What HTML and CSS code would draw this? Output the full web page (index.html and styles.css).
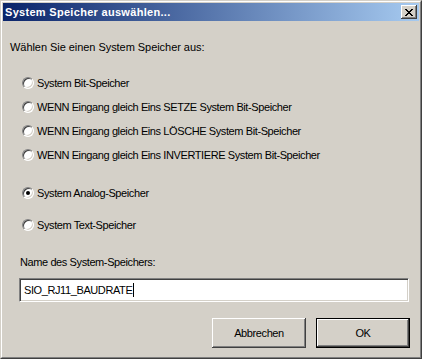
FILE: index.html
```html
<!DOCTYPE html>
<html>
  <head>
    <meta charset="UTF-8" />
    <title>System Speicher auswählen...</title>
    <link rel="stylesheet" href="styles.css">
  </head>
  <body>
    <div class="window">
      <div class="frame">
        <div class="titlebar">
          <span class="title">System Speicher auswählen...</span>
          <span class="close-btn">
            <svg width="8" height="7" viewBox="0 0 8 7">
              <path d="M0 0h2v1h1v1h2v-1h1v-1h2v1h-1v1h-1v1h-1v1h1v1h1v1h1v1h-2v-1h-1v-1h-2v1h-1v1h-2v-1h1v-1h1v-1h1v-1h-1v-1h-1v-1h-1z" fill="#000" />
            </svg>
          </span>
        </div>

        <div class="content">
          <div class="intro">Wählen Sie einen System Speicher aus:</div>

          <div class="radio-group">
            <label class="radio-row"><span class="radio"></span>System Bit-Speicher</label>
            <label class="radio-row"><span class="radio"></span>WENN Eingang gleich Eins SETZE System Bit-Speicher</label>
            <label class="radio-row"><span class="radio"></span>WENN Eingang gleich Eins LÖSCHE System Bit-Speicher</label>
            <label class="radio-row"><span class="radio"></span>WENN Eingang gleich Eins INVERTIERE System Bit-Speicher</label>
          </div>

          <label class="radio-row analog"><span class="radio checked"></span>System Analog-Speicher</label>
          <label class="radio-row text-row"><span class="radio"></span>System Text-Speicher</label>

          <div class="field-label">Name des System-Speichers:</div>
          <div class="textbox">SIO_RJ11_BAUDRATE<span class="caret"></span></div>

          <div class="buttons">
            <span class="btn">Abbrechen</span>
            <span class="btn default"><span class="btn-inner">OK</span></span>
          </div>
        </div>
      </div>
    </div>
  </body>
</html>
```

FILE: styles.css
```css
body {
  margin: 0;
  font-family: "Liberation Sans", Arial, sans-serif;
  font-size: 11px;
  letter-spacing: -0.4px;
  color: #000;
  background: #d4d0c8;
}

.window {
  width: 422px;
  height: 359px;
  box-sizing: border-box;
  border: 1px solid;
  border-color: #d4d0c8 #404040 #404040 #d4d0c8;
  background: #d4d0c8;
}

.frame {
  height: 100%;
  box-sizing: border-box;
  border: 1px solid;
  border-color: #ffffff #808080 #808080 #ffffff;
  padding: 1px;
  display: flex;
  flex-direction: column;
}

.titlebar {
  height: 18px;
  display: flex;
  align-items: center;
  justify-content: space-between;
  background: linear-gradient(90deg, #0a246a 0%, #a6caf0 100%);
  padding: 0 2px;
}

.title {
  color: #fff;
  font-weight: 700;
  font-size: 11px;
  letter-spacing: 0.3px;
}

.close-btn {
  width: 16px;
  height: 14px;
  box-sizing: border-box;
  background: #d4d0c8;
  display: flex;
  align-items: center;
  justify-content: center;
  box-shadow: inset -1px -1px 0 #404040, inset 1px 1px 0 #ffffff,
    inset -2px -2px 0 #808080;
}

.content {
  flex: 1;
  display: flex;
  flex-direction: column;
  padding: 0 9px 0 7px;
}

.intro {
  margin-top: 20px;
  line-height: 13px;
  letter-spacing: -0.05px;
}

.radio-group {
  margin-top: 21px;
  display: flex;
  flex-direction: column;
  gap: 8px;
}

.radio-row {
  display: flex;
  align-items: center;
  height: 16px;
  margin-left: 12px;
}

.analog {
  margin-top: 22px;
}

.text-row {
  margin-top: 16px;
}

.radio {
  width: 12px;
  height: 12px;
  box-sizing: border-box;
  border-radius: 50%;
  border: 1px solid;
  border-color: #808080 #ffffff #ffffff #808080;
  background: #fff;
  box-shadow: inset 1px 1px 0 #404040, inset -1px -1px 0 #d4d0c8;
  margin-right: 3px;
  display: flex;
  align-items: center;
  justify-content: center;
}

.radio.checked::after {
  content: "";
  width: 4px;
  height: 4px;
  border-radius: 50%;
  background: #000;
}

.field-label {
  margin-top: 23px;
  margin-left: 10px;
  line-height: 13px;
}

.textbox {
  margin-top: 9px;
  margin-left: 9px;
  margin-right: 1px;
  height: 24px;
  box-sizing: border-box;
  background: #fff;
  border: 1px solid;
  border-color: #808080 #ffffff #ffffff #808080;
  box-shadow: inset 1px 1px 0 #404040, inset -1px -1px 0 #d4d0c8;
  display: flex;
  align-items: center;
  padding-left: 4px;
}

.caret {
  width: 1px;
  height: 14px;
  background: #000;
  margin-left: 1px;
}

.buttons {
  margin-top: 16px;
  display: flex;
  justify-content: flex-end;
  gap: 10px;
}

.btn {
  width: 94px;
  height: 30px;
  box-sizing: border-box;
  display: flex;
  align-items: center;
  justify-content: center;
  background: #d4d0c8;
  box-shadow: inset -1px -1px 0 #404040, inset 1px 1px 0 #ffffff,
    inset -2px -2px 0 #808080;
}

.btn.default {
  border: 1px solid #000;
  box-shadow: none;
}

.btn-inner {
  width: 100%;
  height: 100%;
  display: flex;
  align-items: center;
  justify-content: center;
  box-shadow: inset -1px -1px 0 #404040, inset 1px 1px 0 #ffffff,
    inset -2px -2px 0 #808080;
}
```
